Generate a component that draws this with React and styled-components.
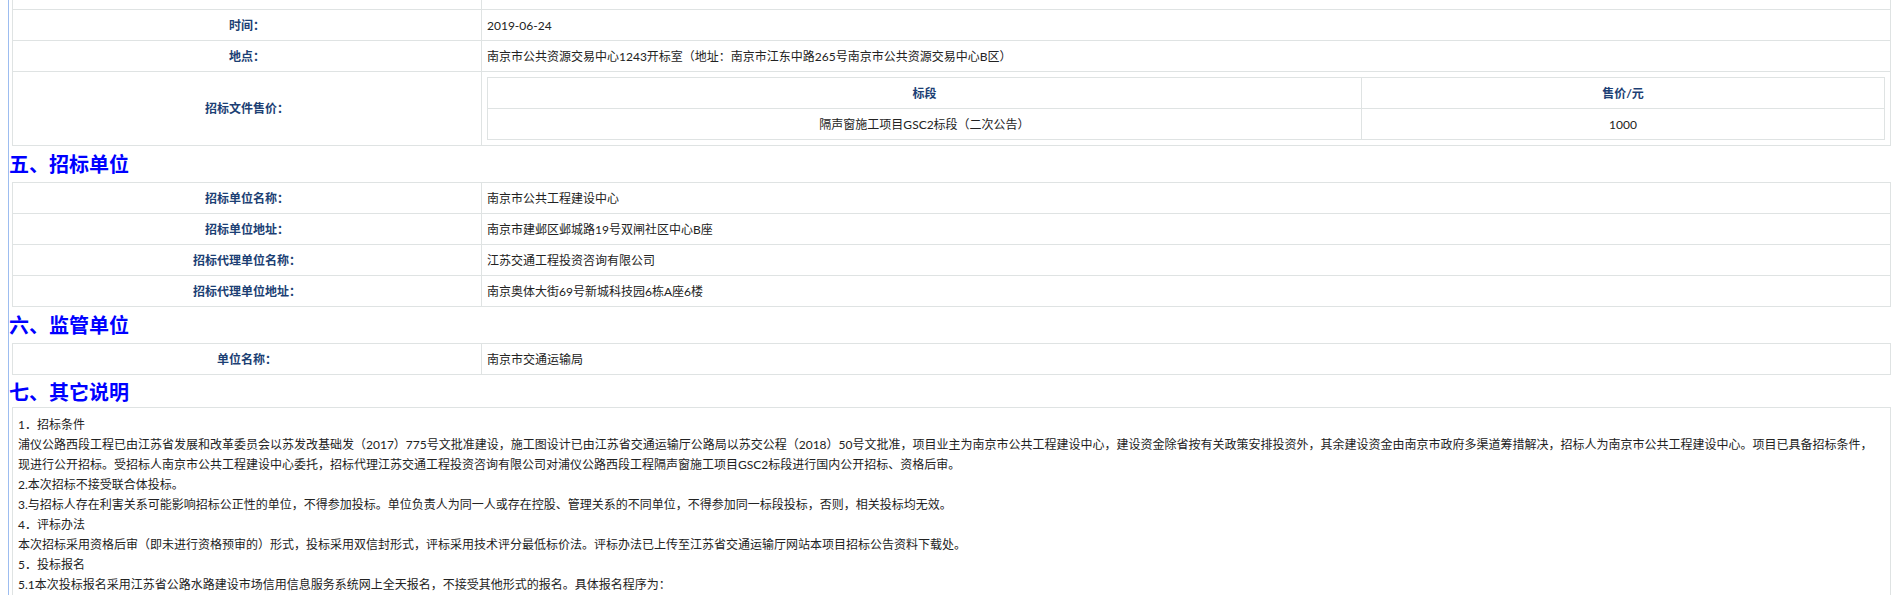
import React from 'react';
import styled, { createGlobalStyle } from 'styled-components';

const Global = createGlobalStyle`
  html, body { margin: 0; padding: 0; height: 595px; overflow: hidden; background: #fff; }
  body { font-family: Lato, "Noto Sans CJK SC", sans-serif; font-size: 12px; color: #222; }
`;

const Page = styled.div`
  margin-left: 8px;
  border-left: 1px solid #9dbdf0;
  height: 595px;
  overflow: hidden;
`;

const Heading = styled.h2`
  margin: 0;
  height: ${p => p.$short ? '32px' : '36px'};
  line-height: ${p => p.$short ? '34px' : '35px'};
  font-family: "Noto Sans CJK SC", sans-serif;
  font-size: 20px;
  font-weight: bold;
  color: #0000ff;
`;

const Table = styled.table`
  width: ${p => p.$inner ? '100%' : '1879px'};
  margin-left: ${p => p.$inner ? '0' : '3px'};
  border-collapse: collapse;
  table-layout: fixed;
`;

const Cell = styled.td`
  border: 1px solid #dfe3e3;
  height: ${p => p.$nest ? '30px' : '29px'};
  padding: ${p => p.$nest ? '5px' : '1px 5px 0'};
  line-height: 20px;
  text-align: ${p => p.$center ? 'center' : 'left'};
  box-sizing: content-box;
`;

const Label = styled(Cell).attrs({ as: 'th' })`
  font-weight: bold;
  color: #1c3f74;
  text-align: center;
`;

const TopSpacer = styled.td`
  height: 9px;
  padding: 0;
  border: 1px solid #dfe3e3;
  border-top: none;
`;

const Notes = styled.div`
  margin-left: 3px;
  width: 1879px;
  box-sizing: border-box;
  border: 1px solid #dfe3e3;
  padding: 7px 12px 5px 5px;
  line-height: 20px;
`;

const Line = styled.p`
  margin: 0;
`;

const Row = ({ label, children }) => (
  <tr>
    <Label>{label}</Label>
    <Cell>{children}</Cell>
  </tr>
);

const Cols = () => (
  <colgroup>
    <col style={{ width: 469 }} />
    <col />
  </colgroup>
);

export default function App() {
  return (
    <Page>
      <Global />
      <Table>
        <Cols />
        <tbody>
          <tr><TopSpacer /><TopSpacer /></tr>
          <Row label="时间：">2019-06-24</Row>
          <Row label="地点：">南京市公共资源交易中心1243开标室（地址：南京市江东中路265号南京市公共资源交易中心B区）</Row>
          <tr>
            <Label>招标文件售价：</Label>
            <Cell $nest>
              <Table $inner>
                <colgroup>
                  <col style={{ width: 874 }} />
                  <col />
                </colgroup>
                <tbody>
                  <tr>
                    <Label>标段</Label>
                    <Label>售价/元</Label>
                  </tr>
                  <tr>
                    <Cell $center>隔声窗施工项目GSC2标段（二次公告）</Cell>
                    <Cell $center>1000</Cell>
                  </tr>
                </tbody>
              </Table>
            </Cell>
          </tr>
        </tbody>
      </Table>
      <Heading>五、招标单位</Heading>
      <Table>
        <Cols />
        <tbody>
          <Row label="招标单位名称：">南京市公共工程建设中心</Row>
          <Row label="招标单位地址：">南京市建邺区邺城路19号双闸社区中心B座</Row>
          <Row label="招标代理单位名称：">江苏交通工程投资咨询有限公司</Row>
          <Row label="招标代理单位地址：">南京奥体大街69号新城科技园6栋A座6楼</Row>
        </tbody>
      </Table>
      <Heading>六、监管单位</Heading>
      <Table>
        <Cols />
        <tbody>
          <Row label="单位名称：">南京市交通运输局</Row>
        </tbody>
      </Table>
      <Heading $short>七、其它说明</Heading>
      <Notes>
        <Line>1．招标条件</Line>
        <Line>浦仪公路西段工程已由江苏省发展和改革委员会以苏发改基础发（2017）775号文批准建设，施工图设计已由江苏省交通运输厅公路局以苏交公程（2018）50号文批准，项目业主为南京市公共工程建设中心，建设资金除省按有关政策安排投资外，其余建设资金由南京市政府多渠道筹措解决，招标人为南京市公共工程建设中心。项目已具备招标条件，现进行公开招标。受招标人南京市公共工程建设中心委托，招标代理江苏交通工程投资咨询有限公司对浦仪公路西段工程隔声窗施工项目GSC2标段进行国内公开招标、资格后审。</Line>
        <Line>2.本次招标不接受联合体投标。</Line>
        <Line>3.与招标人存在利害关系可能影响招标公正性的单位，不得参加投标。单位负责人为同一人或存在控股、管理关系的不同单位，不得参加同一标段投标，否则，相关投标均无效。</Line>
        <Line>4．评标办法</Line>
        <Line>本次招标采用资格后审（即未进行资格预审的）形式，投标采用双信封形式，评标采用技术评分最低标价法。评标办法已上传至江苏省交通运输厅网站本项目招标公告资料下载处。</Line>
        <Line>5．投标报名</Line>
        <Line>5.1本次投标报名采用江苏省公路水路建设市场信用信息服务系统网上全天报名，不接受其他形式的报名。具体报名程序为：</Line>
      </Notes>
    </Page>
  );
}
